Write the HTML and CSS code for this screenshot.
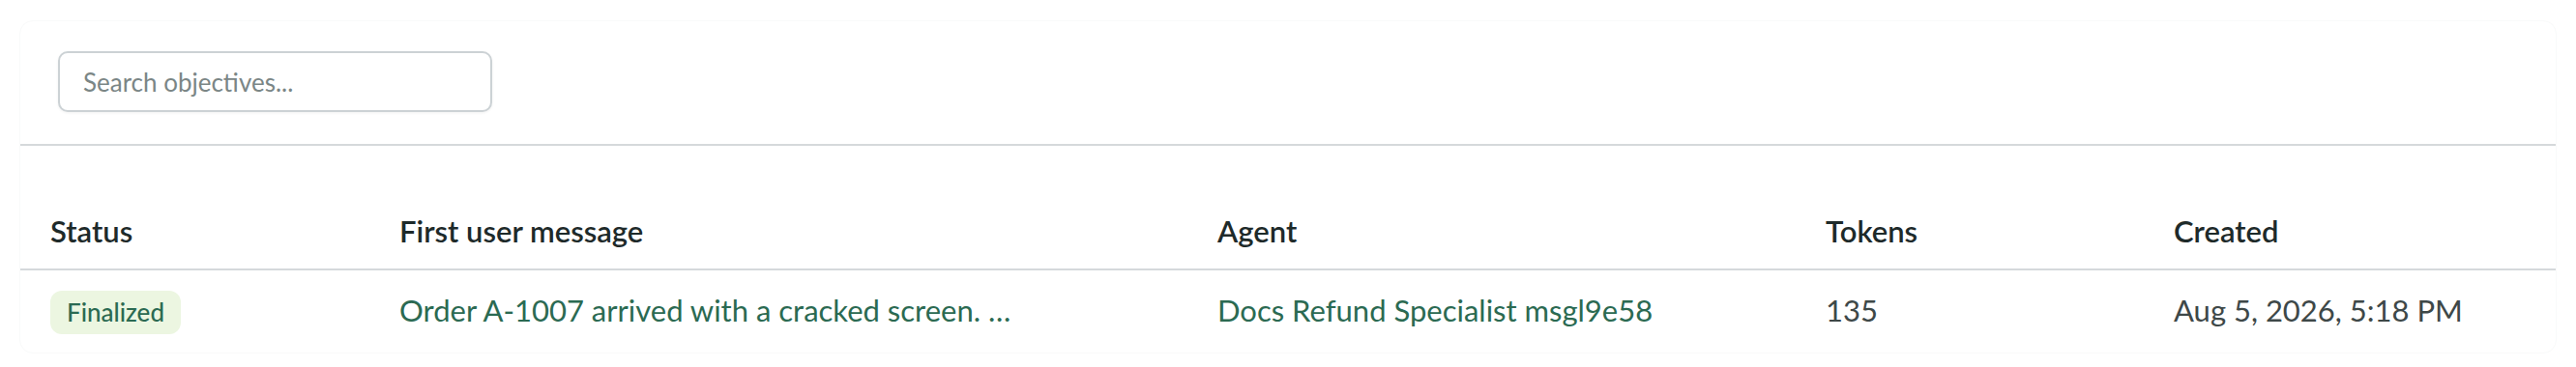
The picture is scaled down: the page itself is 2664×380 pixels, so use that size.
FILE: index.html
```html
<!DOCTYPE html>
<html lang="en">
<head>
<meta charset="utf-8">
<title>Objectives</title>
<link rel="stylesheet" href="styles.css">
</head>
<body>
<div class="page">
  <section class="card">
    <div class="toolbar">
      <input class="search" type="text" placeholder="Search objectives...">
    </div>
    <table class="grid">
      <colgroup>
        <col class="c-status">
        <col class="c-msg">
        <col class="c-agent">
        <col class="c-tokens">
        <col class="c-created">
      </colgroup>
      <thead>
        <tr>
          <th>Status</th>
          <th>First user message</th>
          <th>Agent</th>
          <th>Tokens</th>
          <th>Created</th>
        </tr>
      </thead>
      <tbody>
        <tr>
          <td><span class="badge">Finalized</span></td>
          <td><a class="link" href="#">Order A-1007 arrived with a cracked screen. …</a></td>
          <td><a class="link" href="#">Docs Refund Specialist msgl9e58</a></td>
          <td class="muted">135</td>
          <td class="muted">Aug 5, 2026, 5:18 PM</td>
        </tr>
      </tbody>
    </table>
  </section>
</div>
</body>
</html>
```

FILE: styles.css
```css
* { box-sizing: border-box; }
html, body {
  margin: 0;
  background: #ffffff;
  font-family: "Lato", "Liberation Sans", sans-serif;
}
.page {
  padding: 21px 20px;
}
.card {
  border: 1px solid #f9fafa;
  border-radius: 14px;
  background: #ffffff;
  overflow: hidden;
}
.toolbar {
  padding: 31px 39px 33px;
  border-bottom: 2px solid #d5d9db;
}
.search {
  display: block;
  width: 449px;
  height: 63px;
  border: 2px solid #ccd2d5;
  border-radius: 10px;
  padding: 0 24px;
  font-family: inherit;
  font-size: 26px;
  color: #3b4545;
  background: #fff;
  box-shadow: 0 1px 3px rgba(0,0,0,0.06);
  outline: none;
}
.search::placeholder { color: #7b8686; }
.grid {
  width: 100%;
  border-collapse: collapse;
  table-layout: fixed;
  margin-top: 57px;
}
.c-status { width: 361px; }
.c-msg { width: 846px; }
.c-agent { width: 629px; }
.c-tokens { width: 360px; }
.grid th {
  text-align: left;
  font-weight: 600;
  font-size: 31px;
  color: #1e2a2a;
  padding: 11px 0 19px 31px;
  line-height: 40px;
  border-bottom: 2px solid #d5d9db;
  white-space: nowrap;
}
.grid td {
  padding: 17px 0 19px 31px;
  font-size: 31px;
  line-height: 44px;
  color: #3e4848;
  white-space: nowrap;
  vertical-align: middle;
}
.link {
  color: #2b6a52;
  text-decoration: none;
}
.badge {
  display: inline-block;
  vertical-align: middle;
  background: #ecf6e1;
  color: #2b6a52;
  font-size: 26px;
  font-weight: 500;
  line-height: 45px;
  height: 45px;
  padding: 0 17px;
  border-radius: 12px;
}
```
